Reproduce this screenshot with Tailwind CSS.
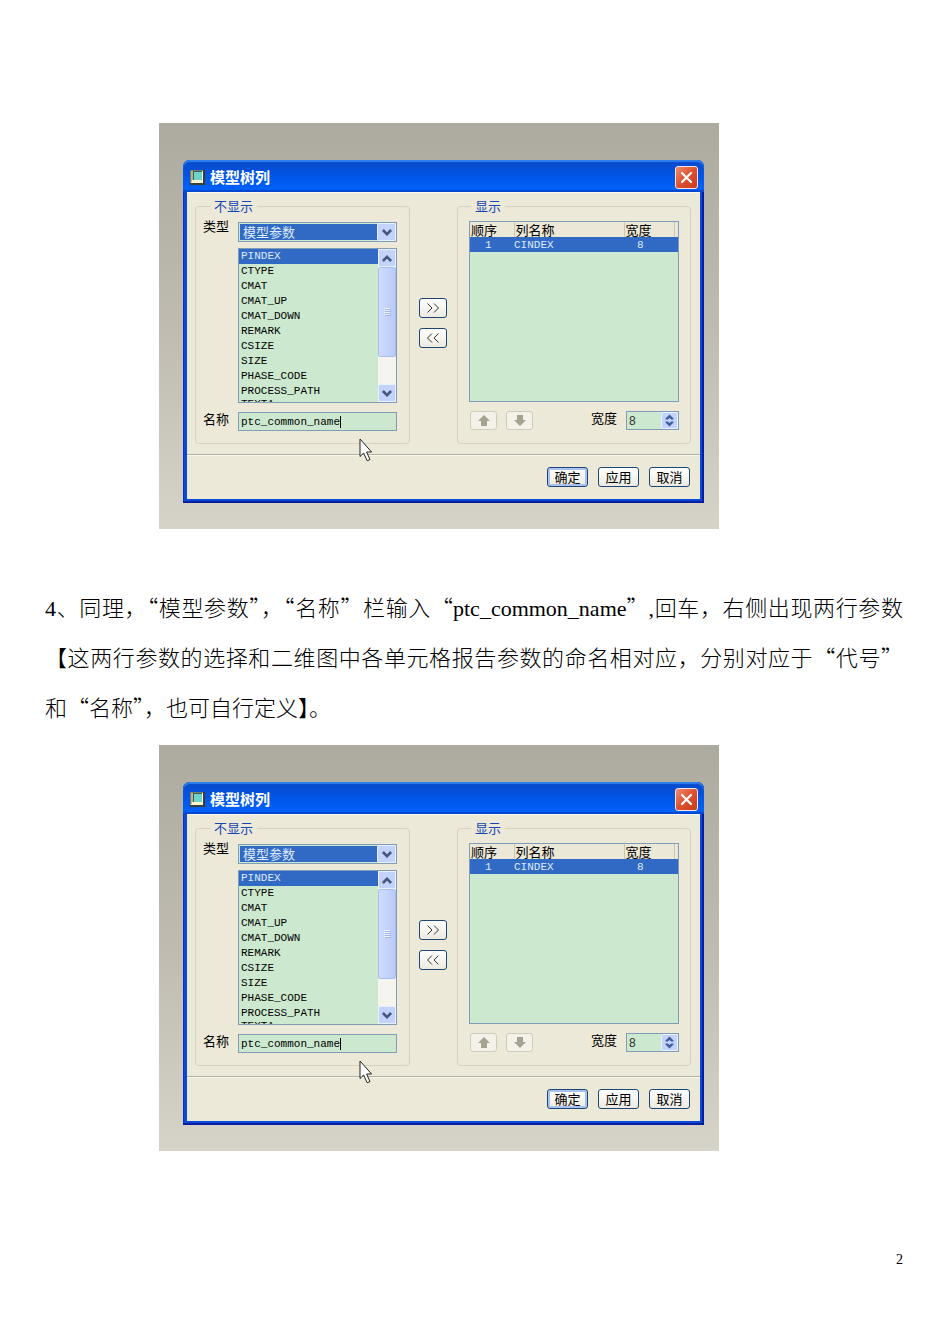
<!DOCTYPE html>
<html lang="zh-CN">
<head>
<meta charset="UTF-8">
<meta name="viewport" content="width=device-width, initial-scale=1.0">
<title>模型树列</title>
<script src="https://cdn.jsdelivr.net/npm/@tailwindcss/browser@4"></script>
</head>
<body class="bg-white text-black">

<main class="flex flex-col min-h-screen pt-[123px] pl-[45px] pr-[47px] pb-[76px] font-['Noto_Sans_CJK_SC',sans-serif]">
    <figure id="fig1" class="dlg w-full max-w-[560px] ml-[114px]"></figure>

    <!-- Step text -->
    <div class="mt-[52px] mb-[14px] text-[22px] leading-[50px] font-light">
        <p class="text-justify [text-align-last:justify]"><span class="leading-none font-['Liberation_Serif',serif]">4</span>、同理，“模型参数”，“名称”栏输入“<span class="leading-none font-['Liberation_Serif',serif]">ptc_common_name</span>”<span class="leading-none font-['Liberation_Serif',serif]">,</span>回车，右侧出现两行参数</p>
        <p class="text-justify [text-align-last:justify]">【这两行参数的选择和二维图中各单元格报告参数的命名相对应，分别对应于“代号”</p>
        <p>和“名称”，也可自行定义】。</p>
    </div>

    <figure id="fig2" class="dlg w-full max-w-[560px] ml-[114px]"></figure>

    <footer class="mt-auto text-right text-[14px] leading-[16px] font-['Liberation_Serif',serif]">2</footer>
</main>

<script>
var params = ['PINDEX', 'CTYPE', 'CMAT', 'CMAT_UP', 'CMAT_DOWN', 'REMARK', 'CSIZE', 'SIZE', 'PHASE_CODE', 'PROCESS_PATH', 'TEXTA']

// small xp arrow, up or down
function chevron(d){
    return `<svg class="w-[10px] h-[7px]" viewBox="0 0 10 7" fill="none" stroke="#45587c" stroke-width="2.6"><path d="${d}"/></svg>`
}
var up = 'M0.9 6 L5 1.9 L9.1 6'
var down = 'M0.9 1 L5 5.1 L9.1 1'

function dialog(n){
    var items = params.map((p, i) => `<li role="option" class="pl-[2px] last:leading-[11px] ${i == 0 ? 'bg-[#316ac5] text-[#dfeafa]' : ''}">${p}</li>`).join('')

    return `
    <div class="relative pt-[37px] pl-[24px] pr-[15px] pb-[26px] bg-linear-to-b from-[#adaa9f] via-[#bfbbb0] to-[#d6d3c8] text-[13px] leading-[14px]">
        <div class="rounded-t-[7px] bg-[#0a48d8] px-[4px] pb-[4px] shadow-[inset_-2px_-2px_0_#001e9e,inset_1px_0_0_#0831c4]">

            <!-- Title bar -->
            <div class="flex items-center h-[32px] -mx-[4px] pl-[7px] pr-[6px] pt-[2px] rounded-t-[7px] bg-linear-to-b from-[#0a48c8] via-[#0055e6] to-[#0064ff] shadow-[inset_0_2px_1px_#2f80ee,inset_0_-2px_1px_#0347cf]">
                <svg class="w-[15px] h-[15px]" viewBox="0 0 15 15">
                    <rect x="0" y="0" width="15" height="15" fill="#3a3f35"/>
                    <path d="M0 0h13v1H1v12H0z" fill="#7d7d60"/>
                    <rect x="1" y="1" width="12" height="12" fill="#fbf6d2"/>
                    <path d="M1 1h2v9h-1v2h-1z" fill="#b9b48c"/>
                    <rect x="3" y="1" width="9" height="9" fill="#2c5f62"/>
                    <rect x="4" y="2" width="8" height="8" fill="#6fd3cc"/>
                </svg>
                <h2 class="ml-[5px] flex-1 text-[15px] font-bold text-white">模型树列</h2>
                <button aria-label="关闭" class="flex items-center justify-center w-[23px] h-[23px] rounded-[3px] border border-[#f3e4e6] bg-linear-to-br from-[#ee8a6c] via-[#dd5030] to-[#c93c18]">
                    <svg class="w-[13px] h-[13px]" viewBox="0 0 13 13" stroke="#fff" stroke-width="2.2" stroke-linecap="round"><path d="M2 2l9 9M11 2l-9 9"/></svg>
                </button>
            </div>

            <div class="bg-[#ece9d8] border-t border-[#fbfaf2]">
                <div class="grid grid-cols-[215fr_47fr_234fr] pt-[6px] pl-[8px] pr-[9px] pb-[10px]">

                    <!-- Hidden columns -->
                    <fieldset class="min-w-0 rounded-[4px] border border-[#d6d2bd] pb-[12px] pl-[7px] pr-[12px]">
                        <legend class="ml-[7px] px-[4px] text-[#1646b4]">不显示</legend>
                        <div class="flex items-start pt-[6px]">
                            <label for="type${n}" class="w-[35px] shrink-0">类型</label>
                            <div class="relative flex-1 min-w-0 h-[20px] mt-[3px] border border-[#7f9db9] bg-[#cce8cf] p-px">
                                <select id="type${n}" class="block appearance-none w-full h-full pl-[3px] bg-[#316ac5] text-[#dfeafa] text-[13px] leading-[14px]">
                                    <option>模型参数</option>
                                </select>
                                <span class="absolute right-0 top-0 flex items-center justify-center w-[19px] h-[18px] rounded-[2px] border border-[#e8f0fc] bg-[#c3d3fb] pointer-events-none">${chevron(down)}</span>
                            </div>
                        </div>
                        <div class="flex mt-[6px] ml-[35px] h-[155px] border border-[#7f9db9] bg-[#cce8cf]">
                            <ul role="listbox" aria-label="参数" class="flex-1 overflow-hidden font-['Liberation_Mono',monospace] text-[11px] leading-[15px]">${items}</ul>
                            <div class="flex flex-col w-[18px] bg-[#f6f4ee]">
                                <button aria-label="向上滚动" class="flex items-center justify-center h-[18px] rounded-[2px] border border-[#e8f0fc] bg-[#c3d3fb]">${chevron(up)}</button>
                                <div class="flex items-center justify-center h-[90px] rounded-[2px] border border-[#a9bdf0] bg-linear-to-r from-[#cfdcfd] to-[#b8cbf8]">
                                    <svg class="w-[7px] h-[8px]" viewBox="0 0 7 8" stroke="#eef4fe"><path d="M0 .5h6M0 2.5h6M0 4.5h6M0 6.5h6"/><path d="M1 1.5h6M1 3.5h6M1 5.5h6M1 7.5h6" stroke="#9db4ec"/></svg>
                                </div>
                                <button aria-label="向下滚动" class="mt-auto flex items-center justify-center h-[18px] rounded-[2px] border border-[#e8f0fc] bg-[#c3d3fb]">${chevron(down)}</button>
                            </div>
                        </div>
                        <div class="flex mt-[9px] h-[19px]">
                            <label for="name${n}" class="w-[35px] shrink-0">名称</label>
                            <div class="flex flex-1 min-w-0 items-center border border-[#7f9db9] bg-[#cce8cf] pl-[2px]">
                                <input id="name${n}" type="text" value="ptc_common_name" class="w-[100px] h-[12px] border-r border-black font-['Liberation_Mono',monospace] text-[11px] outline-none">
                            </div>
                        </div>
                    </fieldset>

                    <!-- Move buttons -->
                    <div class="flex flex-col items-center pt-[99px] gap-[10px] pr-px">
                        <button aria-label="添加" class="flex items-center justify-center w-[28px] h-[20px] rounded-[3px] border border-[#1c4678] bg-linear-to-b from-white to-[#eceae0]">
                            <svg class="w-[14px] h-[10px]" viewBox="0 0 14 10" fill="none" stroke="#333"><path d="M1.5 .5L6 5L1.5 9.5M8 .5L12.5 5L8 9.5"/></svg>
                        </button>
                        <button aria-label="移除" class="flex items-center justify-center w-[28px] h-[20px] rounded-[3px] border border-[#1c4678] bg-linear-to-b from-white to-[#eceae0]">
                            <svg class="w-[14px] h-[10px]" viewBox="0 0 14 10" fill="none" stroke="#333"><path d="M6 .5L1.5 5L6 9.5M12.5 .5L8 5L12.5 9.5"/></svg>
                        </button>
                    </div>

                    <!-- Shown columns -->
                    <fieldset class="min-w-0 rounded-[4px] border border-[#d6d2bd] pb-[12px] pl-[11px] pr-[11px]">
                        <legend class="ml-[2px] px-[4px] text-[#1646b4]">显示</legend>
                        <div class="mt-[8px] h-[181px] border border-[#7f9db9] bg-[#cce8cf]">
                            <table class="w-full table-fixed border-collapse">
                                <thead class="bg-[#ebe8d7]">
                                    <tr class="h-[15px] text-left leading-[13px]">
                                        <th class="w-[44px] p-0 pl-px pb-px font-normal border-r border-[#cbc7b5]">顺序</th>
                                        <th class="p-0 pl-px pb-px font-normal border-r border-[#cbc7b5]">列名称</th>
                                        <th class="w-[50px] p-0 pl-px pb-px font-normal border-r border-[#cbc7b5]">宽度</th>
                                        <th class="w-[4px] p-0"></th>
                                    </tr>
                                </thead>
                                <tbody class="bg-[#316ac5] text-[#dfeafa] font-['Liberation_Mono',monospace] text-[11px]">
                                    <tr class="h-[15px]">
                                        <td class="p-0 pl-[15px]">1</td>
                                        <td class="p-0">CINDEX</td>
                                        <td class="p-0 pl-[13px]">8</td>
                                        <td class="p-0"></td>
                                    </tr>
                                </tbody>
                            </table>
                        </div>
                        <div class="flex items-start mt-[9px] pl-px">
                            <button disabled aria-label="上移" class="flex items-center justify-center w-[27px] h-[19px] rounded-[3px] border border-[#cfccbd] bg-[#f4f2e8]">
                                <svg class="w-[12px] h-[11px]" viewBox="0 0 12 11" fill="#a5a294"><path d="M6 0L12 6H9V11H3V6H0z"/></svg>
                            </button>
                            <button disabled aria-label="下移" class="ml-[9px] flex items-center justify-center w-[27px] h-[19px] rounded-[3px] border border-[#cfccbd] bg-[#f4f2e8]">
                                <svg class="w-[12px] h-[11px]" viewBox="0 0 12 11" fill="#a5a294"><path d="M6 11L0 5H3V0H9V5H12z"/></svg>
                            </button>
                            <label for="width${n}" class="ml-auto mr-[9px]">宽度</label>
                            <div class="flex w-[53px] h-[19px] border border-[#7f9db9] bg-[#cce8cf]">
                                <input id="width${n}" type="text" value="8" class="flex-1 min-w-0 pl-[2px] text-[#333] font-['Liberation_Sans',sans-serif] text-[12px] outline-none">
                                <span class="flex items-center justify-center w-[17px] rounded-[2px] border border-[#e8f0fc] bg-[#c3d3fb]">
                                    <svg class="w-[9px] h-[13px]" viewBox="0 0 9 13" fill="#3f5c9c"><path d="M4.5 0.5L8.5 4.5V5.5H6.2L4.5 4L2.8 5.5H0.5V4.5zM4.5 12.5L8.5 8.5V7.5H6.2L4.5 9L2.8 7.5H0.5V8.5z"/></svg>
                                </span>
                            </div>
                        </div>
                    </fieldset>
                </div>

                <!-- Bottom buttons -->
                <div class="flex justify-end gap-[10px] border-t border-[#b5b2a4] shadow-[inset_0_1px_0_#f8f7ee] pt-[12px] pr-[10px] pb-[12px]">
                    <button class="w-[41px] h-[20px] rounded-[3px] border border-[#1c4678] bg-linear-to-b from-white to-[#eceae0] shadow-[inset_0_0_0_2px_#a9c2f0]">确定</button>
                    <button class="w-[41px] h-[20px] rounded-[3px] border border-[#1c4678] bg-linear-to-b from-white to-[#eceae0]">应用</button>
                    <button class="w-[41px] h-[20px] rounded-[3px] border border-[#1c4678] bg-linear-to-b from-white to-[#eceae0]">取消</button>
                </div>
            </div>
        </div>

        <!-- Mouse pointer -->
        <svg class="absolute left-[200px] top-[315px] w-[14px] h-[24px]" viewBox="0 0 14 24" fill="#fff" stroke="#222">
            <path d="M1 1V18.5L4.6 15L8.2 22.8L11 21.5L7.6 14H12.6z"/>
        </svg>
    </div>`
}

document.querySelectorAll('.dlg').forEach((el, i) => {
    el.innerHTML = dialog(i + 1)
})
</script>
</body>
</html>
